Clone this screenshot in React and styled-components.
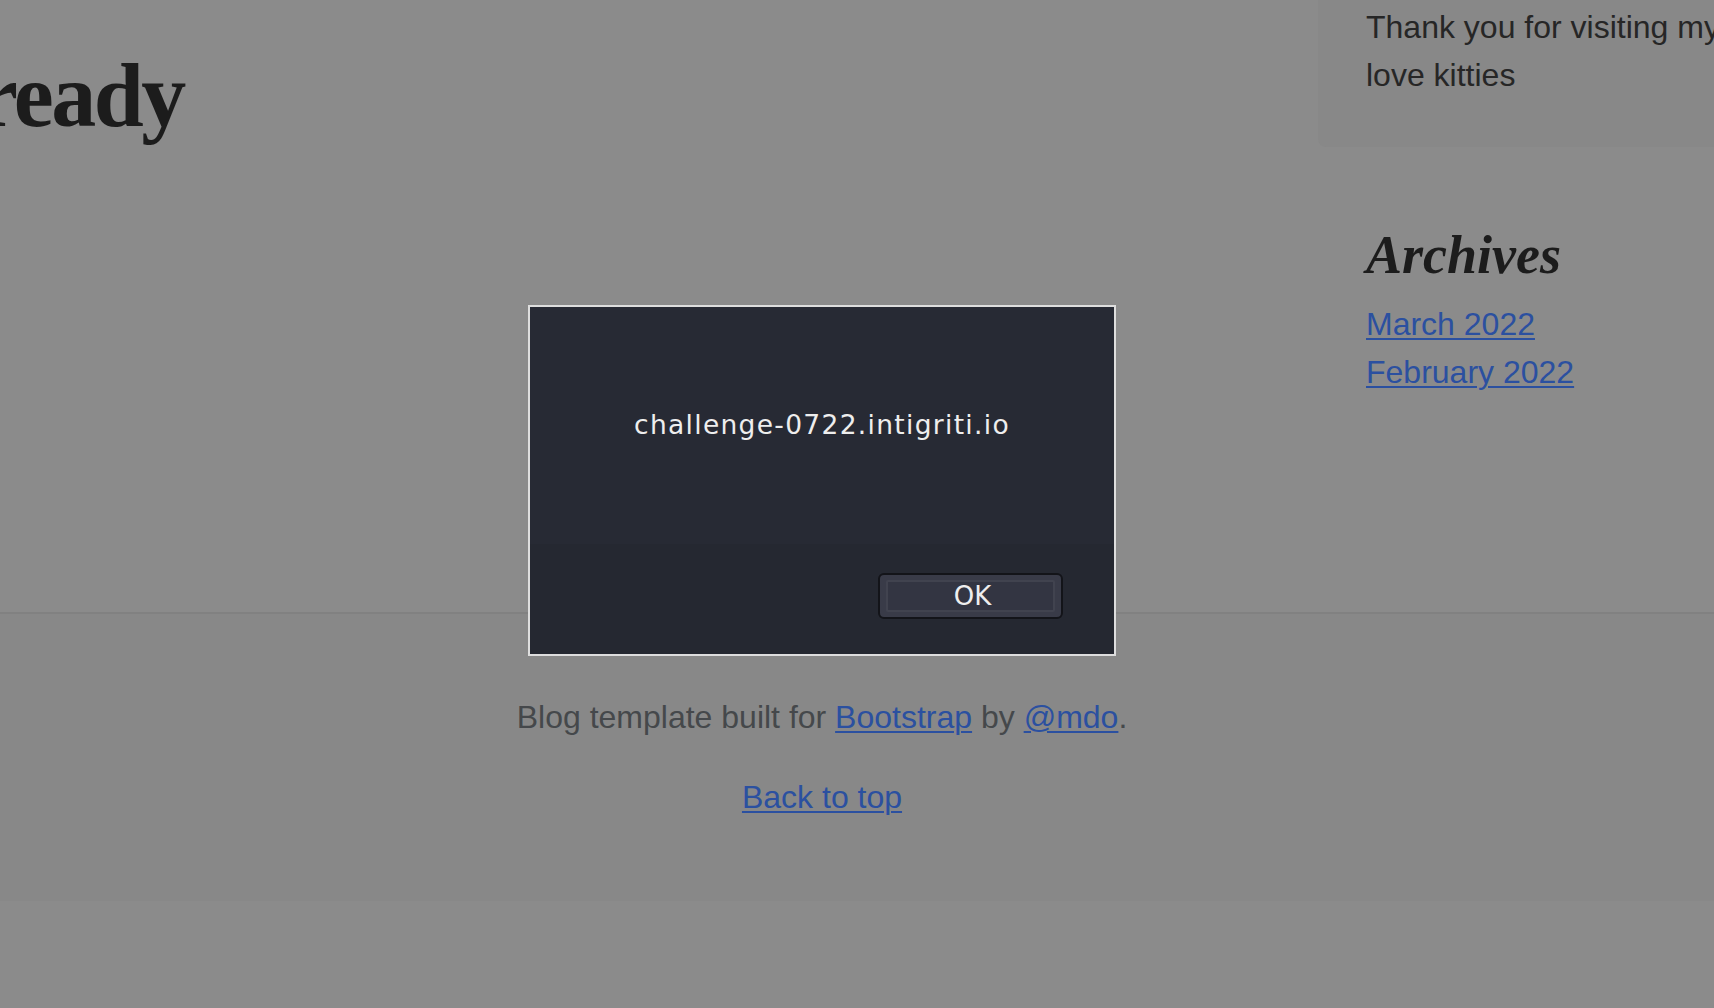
import React from "react";
import styled, { createGlobalStyle } from "styled-components";

const GlobalStyle = createGlobalStyle`
  html, body {
    margin: 0;
    padding: 0;
    background: #8b8b8b;
    overflow: hidden;
  }
  body {
    font-family: "Liberation Sans", Arial, sans-serif;
    color: #222;
  }
`

const Page = styled.div`
  width: 1714px;
  height: 1008px;
  background: #8b8b8b;
  overflow: hidden;
`

const Top = styled.div`
  display: flex;
  height: 612px;
`

const Main = styled.main`
  flex: 1;
  min-width: 0;
`

const PostTitle = styled.h1`
  margin: 42px 0 0 -22px;
  font-family: "Liberation Serif", "Times New Roman", serif;
  font-weight: 700;
  font-size: 90px;
  line-height: 1.2;
  letter-spacing: -2.5px;
  color: #1c1c1c;
`

const Sidebar = styled.aside`
  width: 440px;
  flex-shrink: 0;
  margin-right: -44px;
`

const AboutBox = styled.div`
  background: #888888;
  padding: 3px 48px 48px;
  margin-bottom: 32px;
  border-radius: 0 0 0 8px;
`

const SideText = styled.p`
  margin: 0;
  font-size: 32px;
  line-height: 48px;
  color: #262626;
  white-space: nowrap;
`

const ArchiveBlock = styled.div`
  padding: 48px;
`

const ArchiveTitle = styled.h4`
  margin: 0 0 16px;
  font-family: "Liberation Serif", "Times New Roman", serif;
  font-style: italic;
  font-weight: 700;
  font-size: 54px;
  line-height: 57px;
  color: #1c1c1c;
`

const ArchiveList = styled.ol`
  list-style: none;
  margin: 0;
  padding: 0;
`

const Link = styled.a`
  color: #2b50a0;
  text-decoration: underline;
  text-underline-offset: 3px;
  text-decoration-thickness: 2px;
`

const ArchiveItem = styled.li`
  font-size: 32px;
  line-height: 48px;
`

const Footer = styled.footer`
  background: #888888;
  border-top: 2px solid #818181;
  padding: 79px 70px 80px 0;
  text-align: center;
  font-size: 32px;
  line-height: 48px;
  color: #45484b;
`

const FooterLine = styled.p`
  margin: 0 0 ${(p) => (p.$last ? 0 : 32)}px;
`

const Backdrop = styled.div`
  position: fixed;
  inset: 0;
  display: flex;
  justify-content: center;
  align-items: flex-start;
  padding: 305px 70px 0 0;
  box-sizing: border-box;
`

const Dialog = styled.div`
  width: 588px;
  box-sizing: border-box;
  border: 2px solid #dedede;
  background: #272a34;
  display: flex;
  flex-direction: column;
  font-family: "DejaVu Sans", "Noto Sans", sans-serif;
  color: #eeeeee;
`

const DialogBody = styled.div`
  height: 237px;
  display: flex;
  align-items: center;
  justify-content: center;
  padding-bottom: 3px;
  box-sizing: border-box;
  font-size: 26.5px;
  letter-spacing: 1.3px;
`

const DialogActions = styled.div`
  height: 110px;
  background: #252831;
  display: flex;
  justify-content: flex-end;
  align-items: flex-start;
  padding: 29px 51px 0 0;
  box-sizing: border-box;
`

const OkButton = styled.button`
  width: 185px;
  height: 46px;
  padding: 5px 6px;
  box-sizing: border-box;
  border: 2px solid #131419;
  border-radius: 6px;
  background: #393b48;
  cursor: pointer;
`

const OkFace = styled.span`
  display: flex;
  align-items: center;
  justify-content: center;
  height: 100%;
  box-sizing: border-box;
  border: 2px solid #41434f;
  border-radius: 2px;
  background: #333542;
  padding-left: 4px;
  font-family: "DejaVu Sans", "Noto Sans", sans-serif;
  font-size: 26px;
  color: #eeeeee;
`

function App() {
  return (
    <>
      <GlobalStyle />
      <Page>
        <Top>
          <Main>
            <PostTitle>ready</PostTitle>
          </Main>
          <Sidebar>
            <AboutBox>
              <SideText>Thank you for visiting my</SideText>
              <SideText>love kitties</SideText>
            </AboutBox>
            <ArchiveBlock>
              <ArchiveTitle>Archives</ArchiveTitle>
              <ArchiveList>
                <ArchiveItem><Link href="#">March 2022</Link></ArchiveItem>
                <ArchiveItem><Link href="#">February 2022</Link></ArchiveItem>
              </ArchiveList>
            </ArchiveBlock>
          </Sidebar>
        </Top>
        <Footer>
          <FooterLine>
            Blog template built for <Link href="#">Bootstrap</Link> by <Link href="#">@mdo</Link>.
          </FooterLine>
          <FooterLine $last>
            <Link href="#">Back to top</Link>
          </FooterLine>
        </Footer>
      </Page>
      <Backdrop>
        <Dialog>
          <DialogBody>challenge-0722.intigriti.io</DialogBody>
          <DialogActions>
            <OkButton>
              <OkFace>OK</OkFace>
            </OkButton>
          </DialogActions>
        </Dialog>
      </Backdrop>
    </>
  )
}

export default App
